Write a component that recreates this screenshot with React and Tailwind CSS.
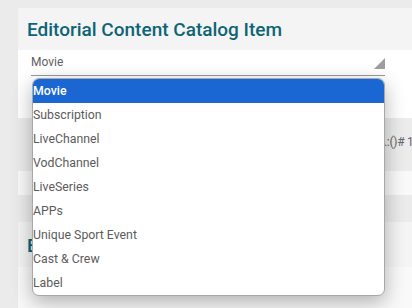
export default function App() {
  const items = [
    "Movie",
    "Subscription",
    "LiveChannel",
    "VodChannel",
    "LiveSeries",
    "APPs",
    "Unique Sport Event",
    "Cast & Crew",
    "Label",
  ];
  return (
    <div
      className="relative w-[412px] h-[308px] overflow-hidden bg-[#ebebeb] pl-[18px] pt-[8px]"
      style={{ fontFamily: "Roboto, 'Liberation Sans', sans-serif" }}
    >
      {/* Panel 1 */}
      <div className="w-[394px]">
        <div className="h-[42px] bg-[#f4f4f4] pl-[9px] pt-[10px]">
          <h2 className="text-[19px] leading-[24px] font-medium text-[#0e6476] whitespace-nowrap">
            Editorial Content Catalog Item
          </h2>
        </div>
        <div className="bg-white">
          <div className="pl-[13px] pr-[27px] pt-[4px]">
            <div className="relative h-[22px] border-b border-[#9a9a9a] flex items-start">
              <span className="text-[12px] leading-[16px] text-[#5f5f5f]">Movie</span>
              <svg className="absolute right-0 top-[4px]" width="11" height="11" viewBox="0 0 11 11">
                <polygon points="11,0 11,11 0,11" fill="#9e9e9e" />
              </svg>
            </div>
          </div>
          <div className="h-[42px]" />
          <div className="h-[53px] bg-[#ececec] pl-[366px] pt-[11px]">
            <span className="text-[12px] leading-[16px] tracking-[-0.3px] text-[#666] whitespace-nowrap">.:()# 1</span>
          </div>
          <div className="h-[24px] bg-[#f9f9f9]" />
        </div>
      </div>
      {/* Panel 2 */}
      <div className="w-[394px] mt-[27px]">
        <div className="h-[45px] bg-[#f4f4f4] pl-[9px] pt-[12px]">
          <h2 className="text-[19px] leading-[24px] font-medium text-[#0e6476] whitespace-nowrap">
            Editorial
          </h2>
        </div>
        <div className="h-[60px] bg-[#f9f9f9]" />
      </div>

      {/* Dropdown */}
      <div className="absolute left-[32px] top-[78px] w-[353px] rounded-[7px] border border-[#a8a8a8] bg-white overflow-hidden shadow-[0_6px_20px_rgba(0,0,0,0.3)]">
        {items.map((it, i) => (
          <div
            key={it}
            className={
              i === 0
                ? "h-[24px] flex items-center bg-[#1a66d2] text-white text-[12.3px] font-medium"
                : "h-[24px] flex items-center text-[#5b5b5b] text-[12.3px]"
            }
          >
            {it}
          </div>
        ))}
      </div>
    </div>
  );
}
